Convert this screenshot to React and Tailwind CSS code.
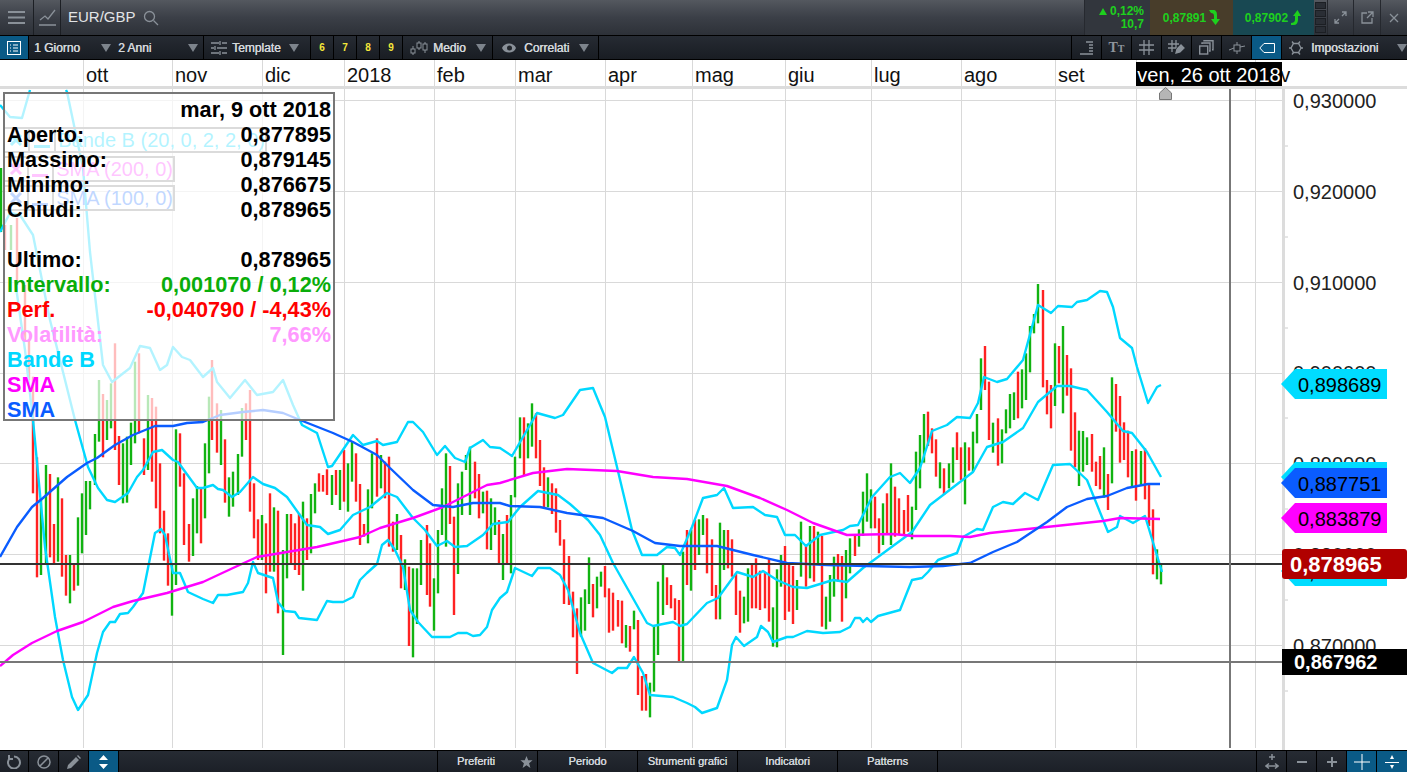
import React from "react";

const grid = [83, 172, 262, 344, 434, 515, 605, 692, 785, 871, 961, 1055, 1136, 1255];
const hgrid = [100, 191, 282, 373, 463, 554, 645];

const Z7 = `r99,-130,220 r111,112,472 g123,240,465 g138,135,435 r150,162,412 r162,312,430 g174,172,425 r186,235,470 r198,405,527 g210,405,550 r222,430,512 g234,292,497 g246,220,400 g258,183,345 g270,183,268 g285,42,195 g297,-120,65 r309,-78,112 g321,-60,60 g333,-110,25 r345,-230,90 r357,48,195 g369,70,250 g381,50,248 g393,8,135 g405,-175,70 r417,-200,40 r432,55,165 g444,-75,150 r456,-66,185 r468,-40,265 r480,130,340 r492,272,422 r504,340,497 g516,430,587 g528,28,495 r540,40,200 r552,160,375 r567,312,425 g579,235,408 g591,198,340 r603,205,370 g615,70,295 g627,-70,160 r636,-180,60 r651,-50,98 g663,-30,135 r675,58,248 g687,172,290 g699,155,260 g714,102,225 g726,-36,110 r738,-50,60 r750,-90,275 r762,190,355 r774,298,420 g786,285,420 r798,310,520 r810,220,455 g822,262,455 r834,272,580 g849,390,705 g861,282,475 r873,282,430 r885,310,450 r897,280,465 g909,245,512 r921,295,420 g933,222,400 g945,190,280 r957,160,215 r969,165,215 r981,148,225 g996,165,255 r1008,150,225 g1020,150,270 r1032,90,245 g1044,130,275 g1056,65,185 r1068,100,245 r1080,192,375 r1092,312,350 g1104,208,370 g1116,100,265 r1130,55,230 g1142,105,205 r1154,125,235 r1166,110,380 r1178,305,395 g1190,282,390 r1202,345,505 g1214,418,510 r1226,440,678 g1238,445,712 g1250,445,612 g1262,360,495 r1280,315,525 r1290,370,560 g1302,475,632 g1314,330,520 g1326,205,345 g1338,100,380 r1350,138,312 r1362,290,585 g1374,190,462 g1386,155,285 g1398,105,150 g1410,80,285 r1425,125,235 r1437,162,295 g1449,215,280 r1461,212,388 g1473,235,390 g1485,262,345 r1497,300,435`;
const Z8 = `g10,462,600 r22,405,555 g34,345,580 g46,230,352 g60,112,235 r72,112,285 g84,130,235 g96,70,200 r108,100,235 r120,180,318 r132,262,382 g144,292,382 r156,310,402 r168,325,458 r180,420,497 r192,478,672 r207,528,675 r219,635,772 r231,685,882 g243,652,770 g255,628,752 g267,532,672 r279,612,712 g291,590,685 g303,575,620 r315,558,652 r327,625,758 r339,638,752 r354,660,740 r366,662,790 g378,735,803 r390,738,815 g402,692,748 r414,720,945 r426,888,992 r438,882,992 g450,908,1012 g462,738,935 g474,605,825 g489,555,705 r501,592,675 r513,615,685 r525,655,720 r537,660,845 g549,515,845 r561,450,615 g573,450,632 r585,420,570 g597,418,525 g609,405,465 r621,415,580 r636,478,648 r648,615,718 g660,428,718 g672,450,570 r684,450,565 r696,478,590 r708,580,705 r720,632,758 g732,650,730 g744,565,725 r756,550,685 r768,535,685 r780,572,690 r795,578,685 r807,535,725 g819,682,800 g831,568,802 g843,525,620 r855,498,720 r867,555,695 r879,558,732 g891,600,690 g903,425,590 r918,495,620 g930,438,595 r942,438,605 g954,455,555 r966,468,740 g978,650,748 g990,585,725 g1002,530,650 r1014,522,605 r1026,528,725 g1038,510,655 g1050,475,580 r1065,462,528 g1077,448,500 g1089,335,468 g1101,280,425 g1113,328,445 r1125,350,445 r1137,415,520 g1149,370,495 r1161,340,465 g1173,250,495 r1185,320,470 r1197,355,465`;
const Z9 = `r162,720,792 r174,675,785 g186,710,808 g198,545,720 g210,495,655 g222,432,578 r234,425,528 r246,475,550 r258,508,620 g270,577,655 r282,595,675 g297,580,655 g309,532,638 r321,487,570 r333,532,630 g345,517,703 r357,532,602 g369,485,605 g381,432,520 g393,265,420 r405,228,360 r417,335,510 g429,458,548 r444,445,587 g456,478,580 g468,418,490 g480,372,475 g492,367,450 r504,305,445 g516,298,415 g528,250,390 g540,168,307 g552,132,190 g564,42,160 r579,60,352 r591,330,433 r603,345,475 g615,220,408 r627,228,340 g639,168,430 r651,255,377 r663,295,542 r675,427,592 g687,482,648 g699,483,605 g711,502,585 r726,492,605 r738,575,648 r750,558,658 g762,532,683 r774,612,720 g786,322,640 r798,342,485 r810,378,578 r822,457,570 r834,482,622 g846,543,650 r858,538,692 g873,543,645 r885,535,688 r897,640,768 r909,718,913 g921,838,928 g933,885,943`;

function parse(s, ox, oy) {
  return s.split(" ").map((t) => {
    const [x, a, b] = t.slice(1).split(",").map(Number);
    return { c: t[0], x: Math.round(ox + x / 3), t: oy + a / 3, b: oy + b / 3 };
  });
}
const bars = [
  { c: "g", x: 1, t: 168, b: 232 }, { c: "r", x: 5, t: 225, b: 250 }, { c: "g", x: 11, t: 225, b: 250 },
  { c: "r", x: 17, t: 218, b: 285 }, { c: "r", x: 25, t: 285, b: 340 }, { c: "r", x: 29, t: 340, b: 380 },
  ...parse(Z7, 0, 420), ...parse(Z8, 500, 380), ...parse(Z9, 850, 270),
];

const SMA100 = "0,557 17,527 32,507 43,498 67,477 87,463 97,458 115,445 133,435 155,426 173,426 187,423 203,422 220,415 243,412 263,410 283,413 300,420 333,433 353,442 377,455 390,468 413,490 433,505 453,507 473,503 500,503 510,506 540,507 567,513 603,518 633,531 655,543 680,546 717,546 753,555 787,563 827,565 867,566 910,567 943,566 970,563 993,552 1017,542 1047,522 1067,507 1087,499 1107,496 1127,488 1148,484 1160,484";
const SMA200 = "0,666 13,655 32,643 57,631 83,622 113,607 133,601 167,593 203,582 233,568 257,557 287,552 317,547 360,537 380,528 413,518 443,507 487,485 500,483 533,473 567,469 617,471 653,477 687,479 727,486 760,498 787,510 813,523 847,535 893,534 913,536 950,536 970,537 990,533 1037,528 1103,521 1120,518 1160,519";
const UPPER = "0,105 10,117 22,118 30,90 M 66,90 67,92 83,168 90,252 103,365 112,382 130,368 140,346 150,348 160,370 167,365 173,347 182,357 190,360 203,377 213,368 217,382 230,398 245,380 257,395 273,392 283,380 293,405 302,425 317,433 328,467 332,466 353,435 363,445 377,441 383,445 397,442 408,422 413,422 423,432 437,455 445,446 455,458 465,462 470,448 483,440 490,447 500,448 512,456 523,437 537,413 555,418 563,415 580,390 593,388 605,417 617,467 632,530 642,555 657,555 667,547 675,548 680,555 692,527 703,498 717,495 724,488 733,508 753,507 765,515 777,517 785,535 795,535 806,546 820,535 843,530 850,526 858,525 872,497 890,477 900,473 910,483 920,468 932,431 947,425 957,417 970,418 978,403 984,377 997,382 1007,379 1023,360 1038,305 1051,313 1058,306 1072,307 1077,302 1087,300 1100,291 1107,292 1113,307 1120,338 1132,348 1137,367 1148,403 1157,387 1161,385";
const MID = "0,232 10,213 20,215 33,235 50,320 75,420 88,467 98,488 107,500 115,502 128,493 137,477 143,470 153,452 162,450 173,460 178,462 197,488 203,488 213,485 218,489 223,490 232,497 240,492 253,477 263,484 275,488 287,497 307,525 320,527 328,534 340,530 353,515 370,507 387,493 397,497 413,518 425,530 437,546 447,541 455,547 467,546 483,535 493,524 500,523 508,522 520,507 538,491 558,495 570,504 588,520 600,535 613,563 647,623 653,626 673,622 680,626 687,624 707,603 718,598 737,572 753,577 763,571 777,580 793,587 807,588 833,580 847,582 863,568 897,543 912,532 930,505 947,492 973,472 987,447 1003,442 1023,428 1038,402 1057,386 1070,386 1087,390 1107,412 1123,431 1132,433 1147,452 1161,477";
const LOWER = "15,280 25,350 33,420 45,547 55,617 63,660 72,697 78,710 88,695 97,653 103,632 110,622 115,622 120,614 128,613 133,607 143,593 155,533 161,529 165,535 173,573 180,573 188,592 203,599 213,603 218,595 227,595 243,592 248,583 253,562 258,573 273,578 278,602 285,611 295,612 299,618 317,620 327,601 333,602 343,602 353,597 360,580 367,573 377,564 382,545 388,540 395,550 403,567 410,610 418,622 432,637 450,637 458,633 467,633 473,636 480,635 487,627 492,610 500,598 507,592 515,568 532,576 538,568 550,568 560,575 568,590 580,633 593,663 612,673 618,668 627,668 634,657 643,673 650,695 673,697 687,703 695,707 702,713 717,708 727,680 732,645 736,637 744,646 757,637 761,626 768,632 773,642 787,637 793,637 807,631 823,633 840,632 850,627 855,618 860,618 863,622 867,618 871,622 878,616 900,610 912,580 922,578 928,572 938,560 957,553 963,537 977,529 983,530 993,507 1003,502 1013,504 1025,493 1038,500 1053,465 1070,464 1087,480 1108,532 1117,527 1120,516 1133,523 1145,516 1162,572";

function Line({ pts, color }) {
  const parts = pts.split(" M ");
  return parts.map((p, i) => (
    <polyline key={i} points={p} fill="none" stroke={color} strokeWidth="2.4" strokeLinejoin="round" />
  ));
}

function Chart() {
  return (
    <svg className="absolute inset-0 block overflow-visible" width="1407" height="661" viewBox="0 89 1407 661">
      {grid.map((x) => <line key={x} x1={x + 0.5} x2={x + 0.5} y1="89" y2="748" stroke="#d9d9d9" />)}
      {hgrid.map((y) => <line key={y} x1="0" x2="1282" y1={y + 0.5} y2={y + 0.5} stroke="#d9d9d9" />)}
      {bars.map((b, i) => (
        <rect key={i} x={b.x - 1.2} y={b.t} width="2.4" height={b.b - b.t} fill={b.c === "r" ? "#ff2222" : "#11b311"} />
      ))}
      <Line pts={UPPER} color="#00d8ff" />
      <Line pts={MID} color="#00d8ff" />
      <Line pts={LOWER} color="#00d8ff" />
      <Line pts={SMA200} color="#ff00ff" />
      <Line pts={SMA100} color="#0a5cff" />
      <line x1="0" x2="1282" y1="564" y2="564" stroke="#333" strokeWidth="2" />
      <line x1="0" x2="1282" y1="662" y2="662" stroke="#777" strokeWidth="2" />
      <line x1="1230" x2="1230" y1="89" y2="748" stroke="#777" strokeWidth="2" />
      <rect x="1282" y="89" width="3" height="661" fill="#dcdcdc" />
      {[146, 237, 328, 418, 509, 600, 691].map((y) => (
        <line key={y} x1="1285" x2="1288" y1={y} y2={y} stroke="#ccc" />
      ))}
      <path d="M1159.500 99.500V93l6-5.500 6 5.500v6.500z" fill="#b5b5b5" stroke="#777" />
    </svg>
  );
}

const Tri = () => <span className="w-0 h-0 border-x-[5px] border-x-transparent border-t-[8px] border-t-[#7d848c]" />;
const txt = "text-[12px] text-[#d4d8dc] [text-shadow:0.4px_0_0_#d4d8dc] whitespace-nowrap";
const I = ({ w = 18, h = 18, children, sw = 1.3, c = "#8a9199" }) => (
  <svg width={w} height={h} viewBox={`0 0 ${w} ${h}`} fill="none" stroke={c} strokeWidth={sw}>{children}</svg>
);

function TopBar() {
  return (
    <div className="h-[36px] flex items-stretch bg-gradient-to-b from-[#54585f] via-[#3b3f47] to-[#2d3138] border-b border-black shrink-0">
      <div className="w-[34px] flex items-center justify-center border-r border-[#1c1f24]">
        <I w={17} h={15} sw={2}><path d="M0 2h17M0 7.500h17M0 13h17" /></I>
      </div>
      <div className="w-[27px] flex items-center justify-center border-r border-[#1c1f24]">
        <I w={17} h={17}><path d="M1 11l5-4 3 3 7-9M0 16h17" /></I>
      </div>
      <div className="ml-[7px] flex items-center text-[15px] text-[#e2e4e6] w-[75px]">EUR/GBP</div>
      <div className="flex items-center">
        <I w={16} h={16}><circle cx="6.500" cy="6.500" r="5" /><path d="M10.500 10.500L15 15" /></I>
      </div>
      <div className="flex-1" />
      <div className="w-[66px] bg-[#32363d] border-l border-[#26292f] flex flex-col items-end justify-center pr-[6px] text-[12px] leading-[13px] font-bold text-[#1ed01e]">
        <div className="flex items-center gap-[3px]"><span className="w-0 h-0 border-x-[4px] border-x-transparent border-b-[7px] border-b-[#1ed01e]" />0,12%</div>
        <div>10,7</div>
      </div>
      <div className="w-[83px] bg-[#483d2a] flex items-center justify-center gap-[3px] text-[12px] font-bold text-[#1ed01e]">
        0,87891
        <svg width="11" height="15" viewBox="0 0 11 15" fill="#1ed01e"><path d="M0 0h4c3 0 4 2 4 5v4h3l-4.500 6L2 9h3V6C5 4 4 3 2 3z" /></svg>
      </div>
      <div className="w-[81px] bg-[#184852] flex items-center justify-center gap-[3px] text-[12px] font-bold text-[#1ed01e]">
        0,87902
        <svg width="11" height="15" viewBox="0 0 11 15" fill="#1ed01e"><path d="M0 15h3c2 0 4-2 4-5V6h3L6.500 0 2 6h2v4c0 2-2 3-4 3z" /></svg>
      </div>
      <div className="w-[13px] flex flex-col justify-center gap-px px-[1px]">
        {[0, 1, 2, 3].map((i) => <div key={i} className="h-[7px] bg-[#2a2e35] border border-[#1c1f24]" />)}
      </div>
      <div className="w-[26px] flex items-center justify-center border-l border-[#25282e]">
        <I w={13} h={13}><path d="M8 1h4v4M12 1L8 5M5 12H1V8M1 12l4-4" /></I>
      </div>
      <div className="w-[27px] flex items-center justify-center border-l border-[#25282e]">
        <I w={13} h={13}><path d="M6 2H1v10h10V7M7 1h5v5M12 1L6 7" /></I>
      </div>
      <div className="w-[27px] flex items-center justify-center border-l border-[#25282e]">
        <I w={10} h={10}><path d="M1 1l8 8M9 1L1 9" /></I>
      </div>
    </div>
  );
}

const Cell = ({ w, children, cls = "" }) => (
  <div className={`flex items-center h-full border-r border-black shrink-0 ${cls}`} style={{ width: w }}>{children}</div>
);

function Toolbar() {
  return (
    <div className="h-[23px] flex items-stretch bg-gradient-to-b from-[#262b33] to-[#191d23] shrink-0">
      <Cell w={29} cls="justify-center bg-[#0a5a86]">
        <svg width="14" height="14" viewBox="0 0 14 14" fill="none" stroke="#fff"><rect x=".5" y=".5" width="13" height="13" /><path d="M3 4h1M6 4h5M3 7h1M6 7h5M3 10h1M6 10h5" /></svg>
      </Cell>
      <div className="w-[84px] flex items-center justify-between pl-[5px] pr-[2px]"><span className={txt}>1 Giorno</span><Tri /></div>
      <Cell w={91} cls="justify-between pl-[5px] pr-[5px]"><span className={txt}>2 Anni</span><Tri /></Cell>
      <Cell w={107} cls="pl-[7px] gap-[5px]">
        <I w={16} h={14}><path d="M0 2h8M11 2h5M0 7h3M6 7h10M0 12h8M11 12h5M9 0v4M4 5v4M9 10v4" /></I>
        <span className={`${txt} w-[52px]`}>Template</span><Tri />
      </Cell>
      {["6", "7", "8", "9"].map((n) => (
        <Cell key={n} w={23} cls="justify-center text-[10px] font-bold text-[#f5e83a]">{n}</Cell>
      ))}
      <Cell w={90} cls="pl-[7px] gap-[5px]">
        <I w={18} h={16} sw={1}><path d="M3 6v9M9 1v9M15 2v11" /><rect x="1" y="9" width="4" height="4" fill="#191d23" /><rect x="7" y="3" width="4" height="5" fill="#191d23" /><rect x="13" y="4" width="4" height="6" fill="#191d23" /></I>
        <span className={`${txt} w-[38px]`}>Medio</span><Tri />
      </Cell>
      <Cell w={106} cls="pl-[9px] gap-[8px]">
        <svg width="14" height="12" viewBox="0 0 14 12"><path d="M0 6c2-6 12-6 14 0-2 6-12 6-14 0z" fill="#8a9199" /><circle cx="7.500" cy="6" r="2.500" fill="#22262c" /></svg>
        <span className={`${txt} w-[47px]`}>Correlati</span><Tri />
      </Cell>
      <div className="flex-1 border-r border-black" />
      <Cell w={30} cls="justify-center">
        <I w={16} h={14}><path d="M7 1h7M10 4h4M10 7h4M10 10h4M1 13h13" /></I>
      </Cell>
      <Cell w={30} cls="justify-center">
        <span className="text-[#8f969d] font-['Liberation_Serif',serif] font-bold text-[14px] leading-none">T<span className="text-[10px]">T</span></span>
      </Cell>
      <Cell w={30} cls="justify-center"><I w={15} h={15}><path d="M5 0v15M10 0v15M0 5h15M0 10h15" /></I></Cell>
      <Cell w={30} cls="justify-center">
        <I w={17} h={15}><path d="M4 0v12M8 0v8M0 4h11M0 8h8" /><path d="M8 13l1-4 4-4 3 3-4 4z" fill="#8a9199" /></I>
      </Cell>
      <Cell w={30} cls="justify-center">
        <I w={15} h={15} sw={1.4}><rect x=".7" y="6" width="8" height="8" /><path d="M3 4V3h8v8h-1M5 1.500V.7h9v9h-1" /></I>
      </Cell>
      <Cell w={30} cls="justify-center">
        <I w={16} h={12} sw={1}><rect x="5" y="3" width="6" height="6" /><path d="M8 0v3M8 9v3M0 8l5-2M11 5l5-1" /></I>
      </Cell>
      <Cell w={30} cls="justify-center bg-[#0a5a86]">
        <svg width="16" height="10" viewBox="0 0 16 10" fill="none" stroke="#fff"><path d="M15.500.5H5L.8 5 5 9.500h10.500z" /></svg>
      </Cell>
      <div className="w-[125px] shrink-0 flex items-center pl-[7px] gap-[8px]">
        <I w={14} h={14}><path d="M4.500 2.500h5L12 7l-2.500 4.500h-5L2 7z" /><path d="M4.500 2.500L3 .5M9.500 2.500L11 .5M4.500 11.500L3 13.500M9.500 11.500L11 13.500M2 7H0M12 7h2" /></I>
        <span className={`${txt} w-[78px]`}>Impostazioni</span>
        <Tri />
      </div>
    </div>
  );
}

function AxisRow() {
  const cells = [["", 83], ["ott", 89], ["nov", 90], ["dic", 82], ["2018", 90], ["feb", 81], ["mar", 90], ["apr", 87], ["mag", 93], ["giu", 86], ["lug", 90], ["ago", 94], ["set", 81], ["ott", 119], ["nov", 152]];
  return (
    <div className="relative h-[27px] flex bg-white border-t border-black shrink-0 text-[20px] leading-[23px] text-[#111]">
      {cells.map(([t, w], i) => (
        <div key={i} className={`pl-[2px] pt-[4px] whitespace-nowrap overflow-hidden shrink-0 ${i ? "border-l border-[#d9d9d9]" : ""}`} style={{ width: w }}>{t}</div>
      ))}
      <div className="absolute left-[1136px] top-[2px] w-[146px] h-[24px] bg-black text-white text-center leading-[26px]">ven, 26 ott 2018</div>
    </div>
  );
}

const Tag = ({ top, bg, text }) => (
  <div className="absolute left-[1281px] w-[106px] h-[30px] pl-[17px] text-[20px] leading-[32px] text-black [clip-path:polygon(0_50%,14px_0,100%_0,100%_100%,14px_100%)]" style={{ top, background: bg }}>{text}</div>
);

const rows = [
  ["", "mar, 9 ott 2018", "text-black"],
  ["Aperto:", "0,877895", "text-black"],
  ["Massimo:", "0,879145", "text-black"],
  ["Minimo:", "0,876675", "text-black"],
  ["Chiudi:", "0,878965", "text-black"],
  ["", "", ""],
  ["Ultimo:", "0,878965", "text-black"],
  ["Intervallo:", "0,001070 / 0,12%", "text-[#0aad0a]"],
  ["Perf.", "-0,040790 / -4,43%", "text-[#ff0000]"],
  ["Volatilità:", "7,66%", "text-[#ff99ff]"],
  ["Bande B", "", "text-[#00d8ff]"],
  ["SMA", "", "text-[#ff00ff]"],
  ["SMA", "", "text-[#0a5cff]"],
];

const Legend = ({ top, w, color, text }) => (
  <div className="absolute left-[3px] flex items-center h-[26px] border-2 border-[#888]" style={{ top, width: w }}>
    <div className="w-[25px] h-full flex items-center justify-center border-r-2 border-[#888]">
      <svg width="14" height="14" viewBox="0 0 14 14" fill="none" stroke={color} strokeWidth="3"><path d="M2 2l10 10M12 2L2 12" /></svg>
    </div>
    <div className="w-[27px] h-full flex items-end justify-center pb-[3px] border-r-2 border-[#888]"><div className="w-[16px] h-[3px]" style={{ background: color }} /></div>
    <div className="pl-[2px] text-[20px] leading-[26px] whitespace-nowrap" style={{ color }}>{text}</div>
  </div>
);

function Plot() {
  return (
    <div className="relative flex-1 bg-white">
      <Chart />
      <div className="absolute left-[1293px] top-px flex flex-col gap-[68.8px] text-[20px] leading-[22px] text-[#222]">
        {["0,930000", "0,920000", "0,910000", "0,900000", "0,890000", "0,880000", "0,870000"].map((t) => <div key={t}>{t}</div>)}
      </div>
      <Legend top={38} w={264} color="#00d8ff" text="Bande B (20, 0, 2, 2, 0)" />
      <Legend top={67} w={172} color="#ff40ff" text="SMA (200, 0)" />
      <Legend top={96} w={172} color="#2f7bff" text="SMA (100, 0)" />
      <div className="absolute left-[3px] top-[3px] w-[332px] h-[329px] border-2 border-[#777] bg-white/70 pt-[3px] pl-[2px] pr-[2px] text-[21.700px] font-bold leading-[25px]">
        {rows.map(([a, b, c], i) => (
          <div key={i} className={`h-[25px] flex justify-between whitespace-nowrap ${c}`}><span>{a}</span><span>{b}</span></div>
        ))}
      </div>
      <Tag top={280} bg="#00dcff" text="0,898689" />
      <Tag top={373} bg="#00dcff" text="" />
      <Tag top={379} bg="#0a5cff" text="0,887751" />
      <Tag top={414} bg="#ff00ff" text="0,883879" />
      <Tag top={467} bg="#00dcff" text="0,877431" />
      <div className="absolute left-[1282px] top-[460px] w-[125px] h-[30px] rounded-[3px] bg-[#b00000] text-white font-bold text-[22px] leading-[32px] pl-[8px]">0,878965</div>
      <div className="absolute left-[1282px] top-[560px] w-[125px] h-[26px] bg-black text-white font-bold text-[20px] leading-[27px] pl-[12px]">0,867962</div>
    </div>
  );
}

const bt = "text-[11px] text-[#d4d8dc] [text-shadow:0.3px_0_0_#d4d8dc] whitespace-nowrap";
const B = ({ w, cls = "", children }) => (
  <div className={`h-full flex items-center justify-center border-r border-black shrink-0 ${cls}`} style={{ width: w }}>{children}</div>
);

function BottomBar() {
  return (
    <div className="h-[22px] flex items-stretch bg-gradient-to-b from-[#262b33] to-[#1c2027] border-t border-black shrink-0">
      <B w={29}><I w={14} h={14} sw={2}><path d="M3 3a6 6 0 1 0 4-1.500M2 0v4h4" /></I></B>
      <B w={30}><I w={14} h={14} sw={1.5}><circle cx="7" cy="7" r="6" /><path d="M3 11l8-8" /></I></B>
      <B w={30}><svg width="14" height="14" viewBox="0 0 14 14" fill="#8a9199"><path d="M0 14l1-4 8-8 3 3-8 8zM10 1l1-1 3 3-1 1z" /></svg></B>
      <B w={30} cls="bg-[#0a5a86]"><svg width="11" height="14" viewBox="0 0 11 14" fill="#fff"><path d="M5.500 0L10 5H1zM1 9h9l-4.500 5z" /></svg></B>
      <div className="w-[319px] border-r border-black" />
      <div className="w-[100px] h-full flex items-center border-r border-black shrink-0 pl-[19px]">
        <span className={`${bt} w-[63px]`}>Preferiti</span>
        <svg width="13" height="14" viewBox="0 0 15 14" fill="#8a9199"><path d="M7.500 0l2 5h5l-4 3.500 1.500 5.500-4.500-3.300L3 14l1.500-5.500L.5 5h5z" /></svg>
      </div>
      <B w={100}><span className={bt}>Periodo</span></B>
      <B w={100}><span className={bt}>Strumenti grafici</span></B>
      <B w={100}><span className={bt}>Indicatori</span></B>
      <B w={100}><span className={bt}>Patterns</span></B>
      <div className="w-[319px] border-r border-black" />
      <B w={30}><I w={14} h={17} sw={1.5}><path d="M7 1v6M4 4h6M1 13h12M4 10.500L1 13l3 2.500M10 10.500l3 2.500-3 2.500" /></I></B>
      <B w={30}><I w={10} h={4} sw={2}><path d="M0 2h10" /></I></B>
      <B w={30}><I w={10} h={10} sw={2}><path d="M0 5h10M5 0v10" /></I></B>
      <B w={30} cls="bg-[#0a5a86]"><I w={16} h={16} c="#fff" sw={1}><path d="M0 8h16M8 0v16" /></I></B>
      <div className="flex-1 flex items-center justify-center bg-[#0a5a86]">
        <svg width="14" height="16" viewBox="0 0 14 16" fill="#fff" stroke="#fff"><path d="M0 8.500h14" strokeWidth="1" /><path d="M7 1L9 5H5zM7 15l2-4H5z" stroke="none" /></svg>
      </div>
    </div>
  );
}

export default function App() {
  return (
    <div className="w-[1407px] h-[772px] flex flex-col overflow-hidden bg-white font-['Liberation_Sans',Arial,sans-serif]">
      <TopBar />
      <Toolbar />
      <AxisRow />
      <div className="h-[3px] bg-[#dcdcdc] shrink-0" />
      <Plot />
      <BottomBar />
    </div>
  );
}
